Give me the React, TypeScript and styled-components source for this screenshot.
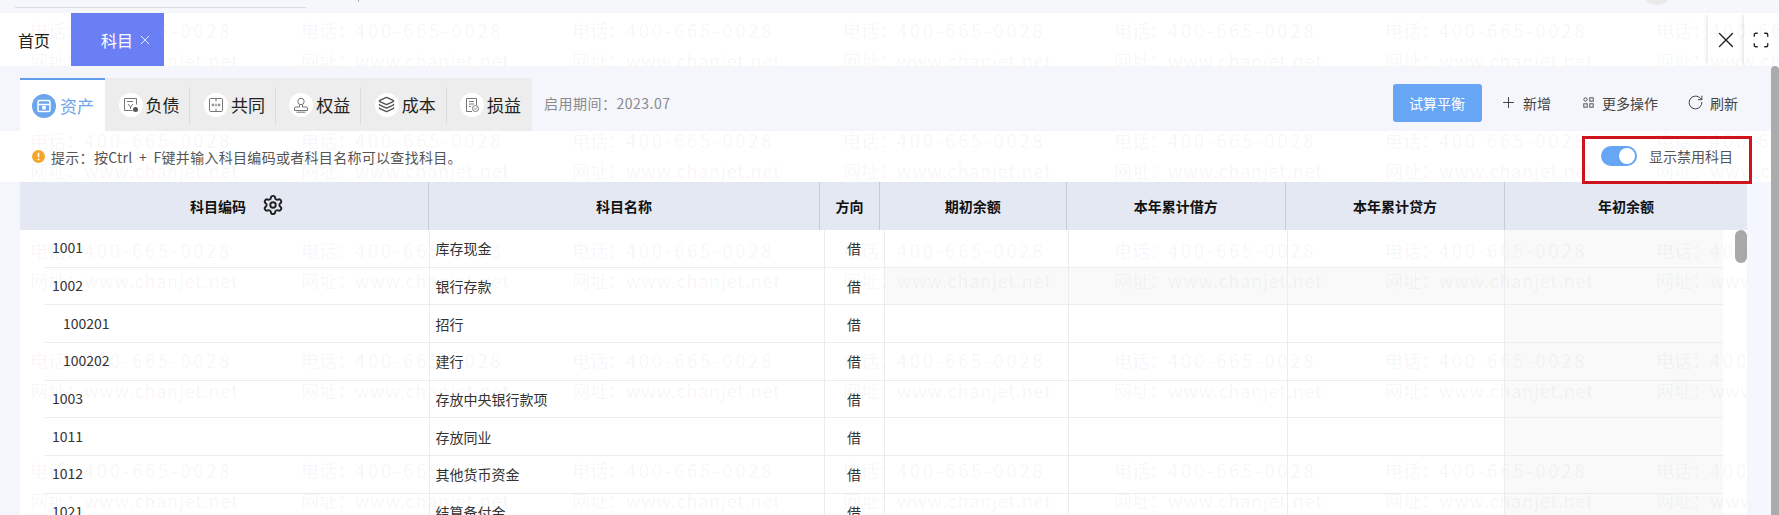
import React from 'react';
import styled, { createGlobalStyle } from 'styled-components';
import { Plus, RotateCw, Scan, Settings, X, Layers } from 'lucide-react';

const GlobalStyle = createGlobalStyle`
  html, body {
    margin: 0;
    padding: 0;
    background: #fff;
  }
  * {
    box-sizing: border-box;
  }
`;

const subjectTabs = [
  { label: '负债', icon: 'debt' },
  { label: '共同', icon: 'shared' },
  { label: '权益', icon: 'equity' },
  { label: '成本', icon: 'cost' },
  { label: '损益', icon: 'profit' },
];

const rows = [
  { code: '1001', name: '库存现金', level: 0 },
  { code: '1002', name: '银行存款', level: 0, hover: true },
  { code: '100201', name: '招行', level: 1 },
  { code: '100202', name: '建行', level: 1 },
  { code: '1003', name: '存放中央银行款项', level: 0 },
  { code: '1011', name: '存放同业', level: 0 },
  { code: '1012', name: '其他货币资金', level: 0 },
  { code: '1021', name: '结算备付金', level: 0 },
];

const TabIcon: React.FC<{ name: string }> = ({ name }) => {
  if (name === 'cost') return <Layers size={17} strokeWidth={2} color="#555" />;
  return (
    <svg width="16" height="16" viewBox="0 0 16 16" fill="none" stroke="#777" strokeWidth="1">
      {name === 'debt' && (
        <>
          <path d="M1.5 1.5h12v6M1.5 1.5v12h8" />
          <path d="M4 4.5h6M5 7l2.5 3L10 7M7.5 10v2" />
          <circle cx="12.5" cy="12.5" r="2.5" fill="#555" stroke="none" />
        </>
      )}
      {name === 'shared' && (
        <>
          <path d="M1.5 2.5a1 1 0 0 1 1-1h11a1 1 0 0 1 1 1v11a1 1 0 0 1-1 1h-11a1 1 0 0 1-1-1z" />
          <path d="M8 1.5v3M8 6.5v3M8 11.5v3M3.5 8h3M5 6.5v3M9.5 8h3M11 6.5v3" />
        </>
      )}
      {name === 'equity' && (
        <>
          <circle cx="8" cy="4.5" r="3.2" />
          <path d="M6.5 7.5v2.5H2.5a1 1 0 0 0-1 1v2.5h13V11a1 1 0 0 0-1-1H9.5V7.5" />
          <path d="M3.5 15.2h9" />
        </>
      )}
      {name === 'profit' && (
        <>
          <path d="M8 14.5H2.5v-13h10V8" />
          <path d="M5 4.5h5M5 7h5M5 9.5h2" />
          <circle cx="11.5" cy="11.5" r="3" />
          <path d="M10.2 11.5l1 1 1.6-1.8" />
        </>
      )}
    </svg>
  );
};

const AssetIcon = () => (
  <svg width="24" height="24" viewBox="0 0 24 24">
    <circle cx="12" cy="12" r="12" fill="#6aa5ee" />
    <path
      d="M7.5 6.5h9a1.5 1.5 0 0 1 1.5 1.5v8a1.5 1.5 0 0 1-1.5 1.5h-9A1.5 1.5 0 0 1 6 16V8a1.5 1.5 0 0 1 1.5-1.5z"
      fill="none"
      stroke="#fff"
      strokeWidth="1.5"
    />
    <path d="M6 10.5h12" stroke="#fff" strokeWidth="1.5" />
    <rect x="10.2" y="11.8" width="3.6" height="3.6" rx="0.5" fill="#fff" />
  </svg>
);

const MoreIcon = () => (
  <MoreIconSvg width="11" height="11" viewBox="0 0 11 11" fill="none" stroke="#555" strokeWidth="1">
    <circle cx="2.5" cy="2.5" r="1.7" />
    <rect x="6.8" y="0.8" width="3.4" height="3.4" />
    <rect x="0.8" y="6.8" width="3.4" height="3.4" />
    <rect x="6.8" y="6.8" width="3.4" height="3.4" />
  </MoreIconSvg>
);

const NoticeIcon = () => (
  <svg width="13" height="13" viewBox="0 0 13 13">
    <circle cx="6.5" cy="6.5" r="6.5" fill="#f4a62a" />
    <path d="M6.5 2.8v4.4" stroke="#fff" strokeWidth="1.6" />
    <circle cx="6.5" cy="9.4" r="0.95" fill="#fff" />
  </svg>
);

const App: React.FC = () => {
  return (
    <>
      <GlobalStyle />
      <Page>
        <Watermark>
          {Array.from({ length: 35 }).map((_, i) => (
            <Mark key={i}>
              <div>
                电话：<Phone>400-665-0028</Phone>
              </div>
              <div>
                网址：<Site>www.chanjet.net</Site>
              </div>
            </Mark>
          ))}
        </Watermark>
        <Content>
          <TopStrip>
            <TopLine />
            <TopTick />
            <Avatar />
          </TopStrip>
          <TabBar>
            <HomeTab>首页</HomeTab>
            <OpenTab>
              科目
              <X size={16} strokeWidth={1.2} color="#fff" />
            </OpenTab>
            <WindowActions>
              <WindowButton>
                <X size={26} strokeWidth={1.3} color="#222" />
              </WindowButton>
              <WindowButton>
                <Scan size={18} strokeWidth={1.8} color="#222" />
              </WindowButton>
            </WindowActions>
          </TabBar>
          <Main>
            <MainBody>
              <Toolbar>
                <ActiveTab>
                  <AssetIcon />
                  资产
                </ActiveTab>
                <TabGroup>
                  {subjectTabs.map((t) => (
                    <SubjectTab key={t.label}>
                      <IconCircle>
                        <TabIcon name={t.icon} />
                      </IconCircle>
                      {t.label}
                    </SubjectTab>
                  ))}
                </TabGroup>
                <StartDate>启用期间：2023.07</StartDate>
                <Actions>
                  <PrimaryButton>试算平衡</PrimaryButton>
                  <ActionLink>
                    <Plus size={17} strokeWidth={1.3} color="#333" />
                    新增
                  </ActionLink>
                  <ActionLink>
                    <MoreIcon />
                    更多操作
                  </ActionLink>
                  <ActionLink>
                    <RotateCw size={17} strokeWidth={1.4} color="#444" />
                    刷新
                  </ActionLink>
                </Actions>
              </Toolbar>
              <Notice>
                <NoticeIcon />
                <NoticeText>提示：按Ctrl + F键并输入科目编码或者科目名称可以查找科目。</NoticeText>
                <ToggleWrap>
                  <ToggleTrack>
                    <ToggleKnob />
                  </ToggleTrack>
                  显示禁用科目
                  <RedBox />
                </ToggleWrap>
              </Notice>
              <TableArea>
                <Table>
                  <HeadRow>
                    <HeadCell $width={409} $pad={26}>
                      科目编码
                      <GearWrap>
                        <Settings size={22} strokeWidth={2.1} color="#222" />
                      </GearWrap>
                    </HeadCell>
                    <HeadCell $width={391}>科目名称</HeadCell>
                    <HeadCell $width={60}>方向</HeadCell>
                    <HeadCell $width={186.5}>期初余额</HeadCell>
                    <HeadCell $width={219.5}>本年累计借方</HeadCell>
                    <HeadCell $width={219}>本年累计贷方</HeadCell>
                    <HeadCell $width={242}>年初余额</HeadCell>
                  </HeadRow>
                  <TableBody>
                    {rows.map((r) => (
                      <Row key={r.code}>
                        <CodeCell $level={r.level}>{r.code}</CodeCell>
                        <NameCell>{r.name}</NameCell>
                        <DirectionCell>借</DirectionCell>
                        <AmountCell $width={184.5} $hover={r.hover} />
                        <AmountCell $width={218.5} $hover={r.hover} />
                        <AmountCell $width={217.5} $hover={r.hover} />
                        <AmountCell $width={219} $shaded />
                      </Row>
                    ))}
                    <ScrollThumb />
                  </TableBody>
                </Table>
                <RightGutter />
              </TableArea>
            </MainBody>
            <PageScrollbar />
          </Main>
        </Content>
      </Page>
    </>
  );
};

export default App;

const Page = styled.div`
  position: relative;
  width: 1779px;
  height: 515px;
  overflow: hidden;
  background: #fff;
  font-family: 'Noto Sans CJK SC', 'Noto Sans', sans-serif;
  color: #333;
`;

const Watermark = styled.div`
  position: absolute;
  inset: 0;
  z-index: 0;
  display: grid;
  grid-template-columns: repeat(7, 271px);
  grid-auto-rows: 110px;
  padding: 15px 0 0 30px;
  pointer-events: none;
`;

const Mark = styled.div`
  font-size: 18px;
  line-height: 30px;
  white-space: nowrap;
  color: rgba(0, 0, 0, 0.05);
`;

const Phone = styled.span`
  letter-spacing: 3px;
`;

const Site = styled.span`
  letter-spacing: 0.8px;
`;

const Content = styled.div`
  position: relative;
  z-index: 1;
  display: flex;
  flex-direction: column;
  height: 100%;
`;

const TopStrip = styled.div`
  position: relative;
  flex: none;
  display: flex;
  align-items: flex-start;
  height: 13px;
  padding-left: 15px;
  overflow: hidden;
  background: #f5f7fb;
`;

const TopLine = styled.div`
  width: 291px;
  height: 1px;
  margin-top: 7px;
  background: #d9dce3;
`;

const TopTick = styled.div`
  width: 1px;
  height: 2px;
  margin-left: 52px;
  background: #aaa;
`;

const Avatar = styled.div`
  position: absolute;
  left: 1642px;
  top: -25px;
  width: 30px;
  height: 30px;
  border-radius: 50%;
  background: #e9e9e9;
`;

const TabBar = styled.div`
  flex: none;
  display: flex;
  align-items: stretch;
  height: 53px;
  overflow: hidden;
`;

const HomeTab = styled.div`
  display: flex;
  align-items: center;
  width: 71px;
  padding-left: 18px;
  font-size: 16px;
  color: #222;
`;

const OpenTab = styled.div`
  display: flex;
  align-items: center;
  gap: 4px;
  width: 93px;
  padding-left: 30px;
  font-size: 16px;
  color: #fff;
  background: rgba(101, 122, 245, 0.96);
`;

const WindowActions = styled.div`
  display: flex;
  margin-left: auto;
`;

const WindowButton = styled.div`
  display: flex;
  align-items: center;
  justify-content: center;
  width: 35.5px;
  box-shadow: -3px 0 4px -2px rgba(0, 0, 0, 0.12);
`;

const Main = styled.div`
  flex: 1;
  display: flex;
  min-height: 0;
`;

const MainBody = styled.div`
  flex: 1;
  display: flex;
  flex-direction: column;
  min-width: 0;
`;

const PageScrollbar = styled.div`
  flex: none;
  width: 8px;
  background: #ababab;
  border-radius: 4px 4px 0 0;
`;

const Toolbar = styled.div`
  flex: none;
  display: flex;
  align-items: stretch;
  height: 65px;
  padding: 12px 33px 0 20px;
  background: #f4f6fc;
`;

const ActiveTab = styled.div`
  display: flex;
  align-items: center;
  gap: 4px;
  width: 85px;
  padding-left: 12px;
  font-size: 17px;
  color: #6ea3ea;
  background: #fff;
  border-top: 2px solid #5f9ded;
`;

const TabGroup = styled.div`
  display: flex;
  background: #ededed;
`;

const SubjectTab = styled.div`
  position: relative;
  display: flex;
  align-items: center;
  gap: 3px;
  width: 85.4px;
  padding-left: 13.5px;
  font-size: 17px;
  color: #222;

  &:not(:last-child)::after {
    content: '';
    position: absolute;
    right: 0;
    top: 9px;
    bottom: 7px;
    width: 1px;
    background: #dcdcdc;
  }
`;

const IconCircle = styled.span`
  display: flex;
  align-items: center;
  justify-content: center;
  width: 24px;
  height: 24px;
  border-radius: 50%;
  background: #fff;
`;

const StartDate = styled.div`
  display: flex;
  align-items: center;
  margin-left: 12px;
  padding-bottom: 3px;
  font-size: 14px;
  letter-spacing: 0.5px;
  color: #8a8a8a;
`;

const Actions = styled.div`
  display: flex;
  align-items: center;
  gap: 29px;
  margin-left: auto;
  padding-bottom: 4px;
`;

const PrimaryButton = styled.div`
  display: flex;
  align-items: center;
  justify-content: center;
  width: 89px;
  height: 38px;
  margin-right: -10.5px;
  border-radius: 3px;
  font-size: 14px;
  color: #fff;
  background: #66a6f5;
`;

const ActionLink = styled.div`
  display: flex;
  align-items: center;
  gap: 6px;
  font-size: 14px;
  color: #444;
`;

const MoreIconSvg = styled.svg`
  margin: 0 2px 0 3px;
`;

const Notice = styled.div`
  position: relative;
  z-index: 2;
  flex: none;
  display: flex;
  align-items: center;
  height: 51px;
  margin-left: 20px;
  padding: 0 38px 0 12px;
  font-size: 14px;
  color: #555;
`;

const NoticeText = styled.span`
  margin-left: 6px;
  letter-spacing: 0.3px;
  word-spacing: 3px;
`;

const ToggleWrap = styled.div`
  position: relative;
  align-self: flex-start;
  display: flex;
  align-items: center;
  gap: 12px;
  height: 20px;
  margin: 15px 0 0 auto;
`;

const ToggleTrack = styled.span`
  display: flex;
  justify-content: flex-end;
  align-items: center;
  width: 36px;
  height: 20px;
  padding-right: 2px;
  border-radius: 10px;
  background: #66a6f5;
`;

const ToggleKnob = styled.span`
  width: 16px;
  height: 16px;
  border-radius: 50%;
  background: #fff;
`;

const RedBox = styled.span`
  position: absolute;
  left: -19px;
  right: -19px;
  top: -10px;
  height: 48px;
  border: 3px solid #d0121b;
  pointer-events: none;
`;

const TableArea = styled.div`
  flex: 1;
  display: flex;
  min-height: 0;
  border-left: 20px solid #f4f6fc;
`;

const Table = styled.div`
  flex: none;
  width: 1727px;
`;

const RightGutter = styled.div`
  flex: 1;
  background: rgba(240, 243, 252, 0.7);
`;

const HeadRow = styled.div`
  display: flex;
  height: 48px;
  background: #e4e8f3;
`;

const HeadCell = styled.div<{ $width: number; $pad?: number }>`
  flex: none;
  display: flex;
  align-items: center;
  justify-content: center;
  width: ${(p) => p.$width}px;
  padding-left: ${(p) => p.$pad || 0}px;
  font-size: 14px;
  font-weight: 700;
  color: #111;
  border-right: 1px solid #c8ccd6;

  &:last-child {
    border-right: none;
  }
`;

const GearWrap = styled.span`
  display: flex;
  margin-left: 16px;
  margin-top: -3px;
`;

const TableBody = styled.div`
  position: relative;
`;

const ScrollThumb = styled.div`
  position: absolute;
  top: 0;
  right: 0;
  width: 12px;
  height: 33px;
  border-radius: 6px;
  background: #a8a8a8;
`;

const Row = styled.div`
  display: flex;
  height: 37.7px;
  margin: 0 24px 0 25px;
  border-bottom: 1px solid #ececec;
`;

const CodeCell = styled.div<{ $level: number }>`
  flex: none;
  display: flex;
  align-items: center;
  width: 383.6px;
  padding-left: ${(p) => 7 + p.$level * 11}px;
  padding-bottom: 2px;
  font-size: 14px;
  color: #333;
`;

const NameCell = styled.div`
  flex: none;
  display: flex;
  align-items: center;
  width: 395px;
  padding-left: 6px;
  font-size: 14px;
  color: #333;
  border-left: 1px solid #ececec;
`;

const DirectionCell = styled.div`
  flex: none;
  display: flex;
  align-items: center;
  justify-content: center;
  width: 60px;
  font-size: 14px;
  color: #333;
  border-left: 1px solid #ececec;
`;

const AmountCell = styled.div<{ $width: number; $hover?: boolean; $shaded?: boolean }>`
  flex: none;
  width: ${(p) => p.$width}px;
  border-left: 1px solid #ececec;
  background: ${(p) => (p.$hover || p.$shaded ? 'rgba(0, 0, 0, 0.024)' : 'transparent')};
`;
